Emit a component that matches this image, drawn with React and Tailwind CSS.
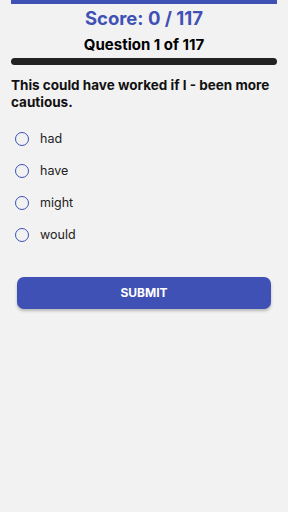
export default function App() {
	const options = ["had", "have", "might", "would"];
	return (
		<div
			className="min-h-[512px] bg-[#f2f2f2] px-[11px]"
			style={{ fontFamily: "Inter, 'Noto Sans', sans-serif" }}
		>
			<div className="h-[4px] bg-[#3f51b5]" />
			<h1 className="mt-[2px] text-center text-[18.5px] font-bold leading-[24px] text-[#3f51b5]">
				Score: 0 / 117
			</h1>
			<h2 className="mt-[6px] text-center text-[15px] font-bold leading-[18px] text-black">
				Question 1 of 117
			</h2>
			<div className="mt-[4px] h-[7px] rounded-full bg-[#222222]" />
			<p className="mt-[12px] text-[13.5px] font-bold leading-[17px] text-[#111]">
				This could have worked if I - been more cautious.
			</p>
			<div className="mt-[12px] flex flex-col">
				{options.map((o) => (
					<label key={o} className="flex h-[32px] items-center">
						<span className="ml-[4px] h-[14px] w-[14px] rounded-full border-[1.5px] border-[#3f51b5]" />
						<span className="ml-[11px] text-[12.5px] text-[#222]">{o}</span>
					</label>
				))}
			</div>
			<button className="mx-[6px] mt-[26px] flex h-[32px] w-[254px] items-center justify-center rounded-[7px] bg-[#3f51b5] text-[12px] font-bold text-white shadow-[0_2px_3px_rgba(0,0,0,0.25)]">
				SUBMIT
			</button>
		</div>
	);
}
